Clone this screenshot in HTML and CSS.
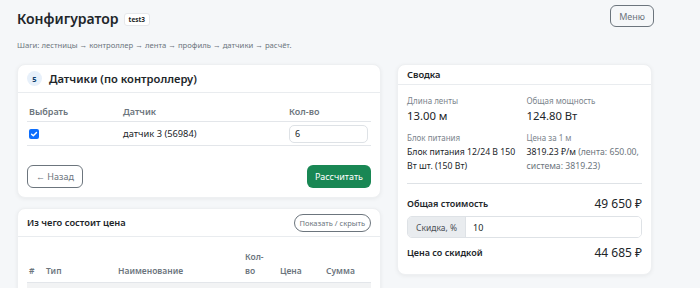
FILE: index.html
```html
<!DOCTYPE html>
<html lang="ru">
<head>
  <meta charset="UTF-8">
  <meta name="viewport" content="width=device-width, initial-scale=1.0">
  <title>Конфигуратор</title>
  <link rel="stylesheet" href="styles.css">
</head>
<body>
  <div class="page">
    <!-- Top bar -->
    <div class="topbar">
      <h1>Конфигуратор <span class="badge">test3</span></h1>
      <button class="btn btn-outline btn-menu">Меню</button>
    </div>
    <p class="steps">Шаги: лестницы → контроллер → лента → профиль → датчики → расчёт.</p>

    <div class="layout">
      <div class="col-main">
        <!-- Step 5 -->
        <div class="card">
          <div class="card-header step-header">
            <span class="step-num">5</span>
            <span class="step-title">Датчики (по контроллеру)</span>
          </div>
          <div class="card-body">
            <table class="table sensors">
              <thead>
                <tr>
                  <th class="c-check">Выбрать</th>
                  <th class="c-name">Датчик</th>
                  <th class="c-qty">Кол-во</th>
                </tr>
              </thead>
              <tbody>
                <tr>
                  <td>
                    <span class="checkbox">
                      <svg viewBox="0 0 10 10" width="10" height="10"><path d="M2.6 5.2 L4.3 6.8 L7.5 3.4" fill="none" stroke="#fff" stroke-width="1.4" stroke-linecap="round" stroke-linejoin="round"/></svg>
                    </span>
                  </td>
                  <td>датчик 3 (56984)</td>
                  <td><input class="form-control" type="text" value="6"></td>
                </tr>
              </tbody>
            </table>
            <div class="actions">
              <button class="btn btn-outline btn-back">← Назад</button>
              <button class="btn btn-success">Рассчитать</button>
            </div>
          </div>
        </div>

        <!-- Price breakdown -->
        <div class="card">
          <div class="card-header breakdown-header">
            <span class="small-title">Из чего состоит цена</span>
            <button class="btn btn-pill">Показать / скрыть</button>
          </div>
          <div class="card-body">
            <table class="table breakdown">
              <thead>
                <tr>
                  <th class="b-num">#</th>
                  <th class="b-type">Тип</th>
                  <th class="b-name">Наименование</th>
                  <th class="b-qty">Кол-во</th>
                  <th class="b-price">Цена</th>
                  <th class="b-sum">Сумма</th>
                </tr>
              </thead>
              <tbody>
                <tr class="striped"><td colspan="6">&nbsp;</td></tr>
              </tbody>
            </table>
          </div>
        </div>
      </div>

      <!-- Summary -->
      <div class="card summary">
        <div class="card-header summary-header">
          <span class="small-title">Сводка</span>
        </div>
        <div class="card-body summary-body">
          <div class="stats">
            <div>
              <div class="label">Длина ленты</div>
              <div class="value-big">13.00 м</div>
            </div>
            <div>
              <div class="label">Общая мощность</div>
              <div class="value-big">124.80 Вт</div>
            </div>
            <div>
              <div class="label">Блок питания</div>
              <div class="value">Блок питания 12/24 В 150 Вт шт. (150 Вт)</div>
            </div>
            <div>
              <div class="label">Цена за 1 м</div>
              <div class="value">3819.23 ₽/м <span class="muted">(лента: 650.00, система: 3819.23)</span></div>
            </div>
          </div>
          <hr>
          <div class="total-row">
            <span class="total-label">Общая стоимость</span>
            <span class="total-value">49 650 ₽</span>
          </div>
          <div class="input-group">
            <span class="addon">Скидка, %</span>
            <input class="group-input" type="text" value="10">
          </div>
          <div class="total-row discount-row">
            <span class="total-label">Цена со скидкой</span>
            <span class="total-value">44 685 ₽</span>
          </div>
        </div>
      </div>
    </div>
  </div>
</body>
</html>
```

FILE: styles.css
```css
body {
  margin: 0;
  font-family: "Noto Sans", "Open Sans", sans-serif;
  background-color: #f5f7f9;
  color: #212529;
  font-size: 10px;
}
.page {
  width: 636px;
  padding: 5px 0 0 17px;
}
.topbar {
  display: flex;
  justify-content: space-between;
  align-items: flex-start;
}
h1 {
  margin: 4px 0 0;
  font-size: 14px;
  font-weight: 600;
  line-height: 20px;
  display: flex;
  align-items: center;
  gap: 5px;
}
.badge {
  font-size: 6.5px;
  font-weight: 700;
  line-height: 11px;
  padding: 0 4px;
  background: #fff;
  border: 1px solid #e6e8eb;
  border-radius: 3px;
}
.btn {
  font-family: inherit;
  cursor: pointer;
  border-radius: 6px;
}
.btn-outline {
  background: transparent;
  border: 1px solid #6c757d;
  color: #6c757d;
}
.btn-menu {
  margin-right: -1px;
  height: 22px;
  padding: 0 8px;
  font-size: 9px;
}
.steps {
  margin: 10px 0 0;
  font-size: 7.7px;
  color: #6c757d;
  line-height: 12px;
}
.layout {
  display: grid;
  grid-template-columns: 364px 255px;
  column-gap: 16px;
  align-items: start;
  margin-top: 13px;
}
.col-main {
  display: flex;
  flex-direction: column;
  gap: 10px;
}
.card {
  background: #fff;
  border-radius: 8px;
  box-shadow: 0 1px 4px rgba(0, 0, 0, 0.06);
  border: 1px solid #eef0f2;
}
.card-header {
  border-bottom: 1px solid #e9ecef;
  display: flex;
  align-items: center;
}
.card-body {
  padding: 9px;
}
.step-header {
  height: 27px;
  padding: 0 9px;
  gap: 7px;
}
.step-num {
  width: 15px;
  height: 15px;
  border-radius: 50%;
  background: #e7f0fa;
  color: #0b3d6b;
  font-size: 7.5px;
  font-weight: 700;
  display: flex;
  align-items: center;
  justify-content: center;
}
.step-title {
  font-size: 11.2px;
  font-weight: 600;
}
.table {
  width: 100%;
  border-collapse: collapse;
  table-layout: fixed;
}
.table th {
  text-align: left;
  font-weight: 600;
  color: #6c757d;
  font-size: 9px;
}
.sensors th {
  height: 19px;
  padding: 0 2px;
  border-bottom: 1px solid #e3e6ea;
}
.sensors td {
  height: 23px;
  padding: 0 2px;
  border-bottom: 1px solid #e3e6ea;
  font-size: 9.3px;
}
.c-check {
  width: 90px;
}
.c-qty {
  width: 80px;
}
.checkbox {
  display: flex;
  align-items: center;
  justify-content: center;
  width: 10px;
  height: 10px;
  background: #0d6efd;
  border-radius: 2px;
}
.form-control {
  box-sizing: border-box;
  width: 79px;
  height: 18px;
  border: 1px solid #dee2e6;
  border-radius: 5px;
  padding: 0 5px;
  font-family: inherit;
  font-size: 9px;
  color: #212529;
}
.actions {
  display: flex;
  justify-content: space-between;
  margin-top: 19px;
}
.btn-back {
  height: 23px;
  padding: 0 8px;
  font-size: 9px;
}
.btn-success {
  height: 23px;
  padding: 0 8px;
  font-size: 9px;
  border: none;
  background: #198754;
  color: #fff;
}
.small-title {
  font-size: 9.3px;
  font-weight: 600;
}
.breakdown-header {
  height: 27px;
  padding: 0 9px;
  justify-content: space-between;
}
.btn-pill {
  height: 18px;
  padding: 0 5px;
  font-size: 7.5px;
  border: 1px solid #6c757d;
  border-radius: 9px;
  background: #fff;
  color: #6c757d;
}
.breakdown {
  margin-top: 2px;
}
.breakdown th {
  padding: 2px 2px 4px;
  vertical-align: bottom;
  line-height: 14px;
  font-size: 8.5px;
}
.b-num { width: 13px; }
.b-type { width: 68px; }
.b-name { width: 123px; }
.breakdown th.b-qty {
  width: 23px;
  padding-right: 10px;
}
.b-price { width: 42px; }
.striped td {
  background: #f2f3f4;
  height: 14px;
  border-top: 1px solid #e3e6ea;
}
.summary-header {
  height: 19px;
  padding: 0 9px;
}
.summary-body {
  padding-bottom: 12px;
}
.stats {
  display: grid;
  grid-template-columns: 1fr 1fr;
  column-gap: 4px;
  row-gap: 7px;
}
.label {
  font-size: 8px;
  color: #7b848c;
  line-height: 14px;
}
.value-big {
  font-size: 11.3px;
  line-height: 16px;
}
.value {
  font-size: 8.7px;
  line-height: 14px;
}
.muted {
  color: #6c757d;
}
hr {
  border: none;
  border-top: 1px solid #dee2e6;
  margin: 10px 0 9px;
}
.total-row {
  display: flex;
  justify-content: space-between;
  align-items: center;
  height: 20px;
}
.discount-row {
  margin-top: 4px;
}
.total-label {
  font-size: 9px;
  font-weight: 600;
}
.total-value {
  font-size: 12px;
}
.input-group {
  display: flex;
  height: 22px;
  margin-top: 3px;
  border: 1px solid #dee2e6;
  border-radius: 5px;
  overflow: hidden;
  box-sizing: border-box;
}
.addon {
  width: 57px;
  background: #e9ecef;
  color: #495057;
  border-right: 1px solid #dee2e6;
  font-size: 8.5px;
  display: flex;
  align-items: center;
  justify-content: center;
}
.group-input {
  flex: 1;
  border: none;
  padding: 0 7px;
  font-family: inherit;
  font-size: 9px;
  color: #212529;
}
```
